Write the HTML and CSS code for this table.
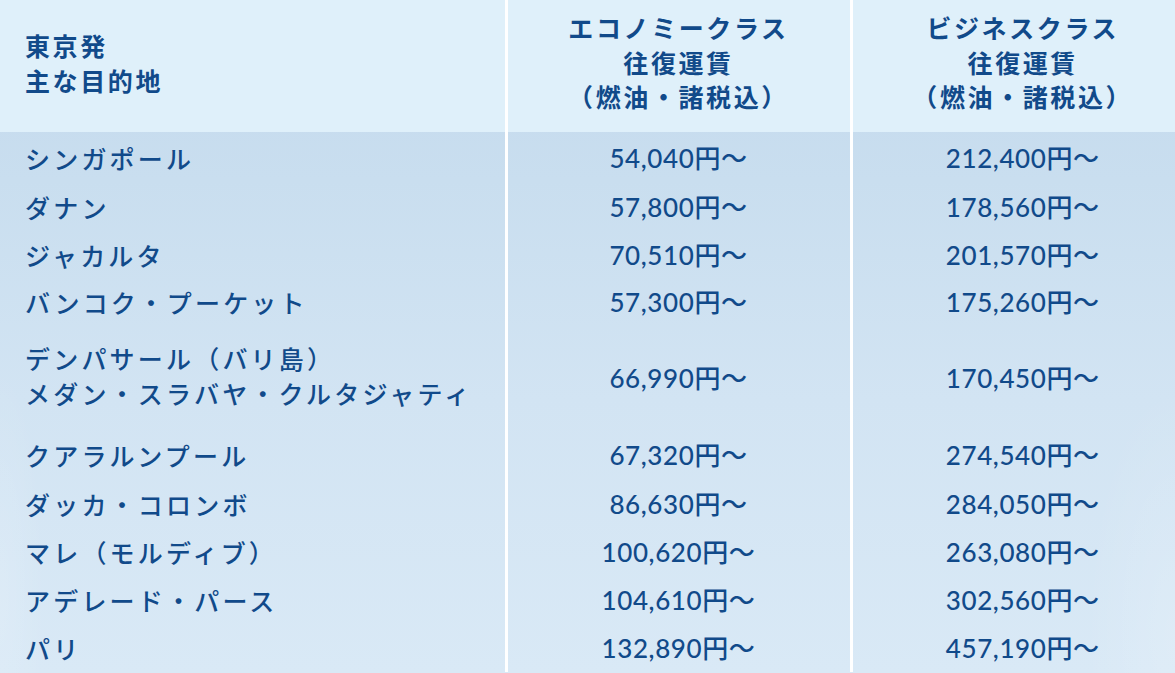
FILE: index.html
```html
<!DOCTYPE html>
<html lang="ja">
<head>
<meta charset="utf-8">
<title>東京発 運賃表</title>
<link rel="stylesheet" href="styles.css">
</head>
<body>
<div class="fare">
  <table class="fare-table">
    <thead>
      <tr>
        <th class="col-dest">東京発<br>主な目的地</th>
        <th class="col-eco">エコノミークラス<br>往復運賃<br>（燃油・諸税込）</th>
        <th class="col-biz">ビジネスクラス<br>往復運賃<br>（燃油・諸税込）</th>
      </tr>
    </thead>
    <tbody>
      <tr class="r1"><td class="dest">シンガポール</td><td class="price">54,040円〜</td><td class="price">212,400円〜</td></tr>
      <tr class="r2"><td class="dest">ダナン</td><td class="price">57,800円〜</td><td class="price">178,560円〜</td></tr>
      <tr class="r3"><td class="dest">ジャカルタ</td><td class="price">70,510円〜</td><td class="price">201,570円〜</td></tr>
      <tr class="r4"><td class="dest">バンコク・プーケット</td><td class="price">57,300円〜</td><td class="price">175,260円〜</td></tr>
      <tr class="r5"><td class="dest dest-2">デンパサール（バリ島）<br>メダン・スラバヤ・クルタジャティ</td><td class="price">66,990円〜</td><td class="price">170,450円〜</td></tr>
      <tr class="r6"><td class="dest">クアラルンプール</td><td class="price">67,320円〜</td><td class="price">274,540円〜</td></tr>
      <tr class="r7"><td class="dest">ダッカ・コロンボ</td><td class="price">86,630円〜</td><td class="price">284,050円〜</td></tr>
      <tr class="r8"><td class="dest">マレ（モルディブ）</td><td class="price">100,620円〜</td><td class="price">263,080円〜</td></tr>
      <tr class="r9"><td class="dest">アデレード・パース</td><td class="price">104,610円〜</td><td class="price">302,560円〜</td></tr>
      <tr class="r10"><td class="dest">パリ</td><td class="price">132,890円〜</td><td class="price">457,190円〜</td></tr>
    </tbody>
  </table>
</div>
</body>
</html>
```

FILE: styles.css
```css
html, body {
  margin: 0;
  padding: 0;
  background: #d6e7f4;
}

.fare {
  width: 1175px;
  height: 673px;
  overflow: hidden;
  background:
    radial-gradient(ellipse 90px 260px at 1175px 640px, rgba(255,255,255,0.16), rgba(255,255,255,0) 100%),
    radial-gradient(ellipse 45px 240px at 0 600px, rgba(255,255,255,0.14), rgba(255,255,255,0) 100%),
    linear-gradient(180deg, #c3d9ed 0, #c9deef 180px, #d2e4f3 400px, #d9e9f6 673px);
}

.fare-table {
  border-collapse: collapse;
  border-spacing: 0;
  table-layout: fixed;
  width: 1193px;
  font-family: "Noto Sans CJK JP", sans-serif;
  color: #114a8a;
}

.fare-table th,
.fare-table td {
  padding: 0;
  box-sizing: border-box;
}

.col-dest { width: 506px; }
.col-eco { width: 345px; }
.col-biz { width: 342px; }

.fare-table th.col-dest,
.fare-table th.col-eco,
.fare-table td:nth-child(1),
.fare-table td:nth-child(2) {
  border-right: 3px solid #ffffff;
}

.fare-table thead th {
  background: #dff0fa;
  height: 132px;
  font-weight: 700;
  font-size: 25px;
  letter-spacing: 2.6px;
  vertical-align: top;
}

.fare-table thead th.col-dest {
  text-align: left;
  padding-left: 25px;
  line-height: 35px;
  padding-top: 28px;
}

.fare-table thead th.col-eco,
.fare-table thead th.col-biz {
  text-align: center;
  line-height: 34.5px;
  padding-top: 10px;
}

.fare-table td {
  vertical-align: middle;
  line-height: 34px;
}

.fare-table td.dest {
  text-align: left;
  padding-left: 25px;
  font-family: "Noto Sans CJK JP Medium", "Noto Sans CJK JP", sans-serif;
  font-size: 25px;
  font-weight: 500;
  letter-spacing: 3.2px;
  white-space: nowrap;
}

.fare-table td.dest-2 {
  line-height: 35px;
  padding-bottom: 5px;
}

.fare-table td.price {
  text-align: center;
  font-family: "Lato", "Noto Sans CJK JP Medium", "Noto Sans CJK JP", sans-serif;
  font-size: 26px;
  font-weight: 500;
  letter-spacing: 0.6px;
  white-space: nowrap;
}

.r1 td { height: 51px; }
.r2 td { height: 48px; }
.r3 td { height: 47px; }
.r4 td { height: 47px; }
.r5 td { height: 106px; }
.r6 td { height: 48px; }
.r7 td { height: 49px; }
.r8 td { height: 48px; }
.r9 td { height: 48px; }
.r10 td { height: 48px; }
```
